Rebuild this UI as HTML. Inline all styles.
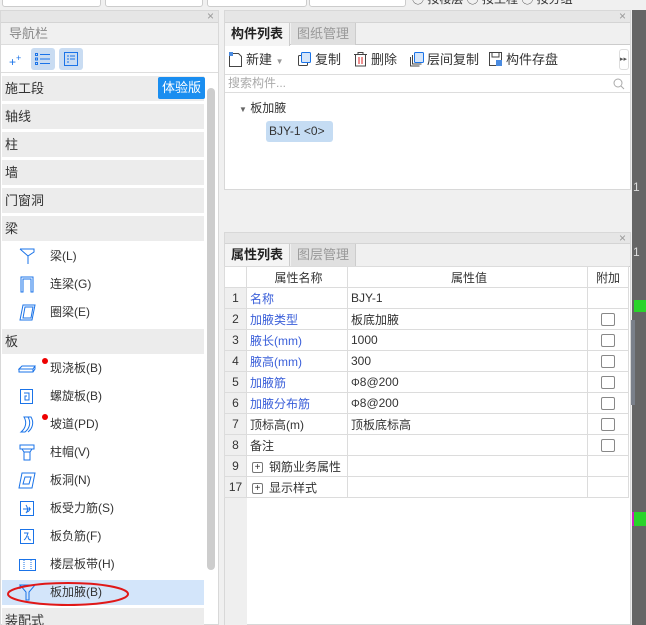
<!DOCTYPE html><html><head><meta charset="utf-8"><style>
*{box-sizing:border-box;margin:0;padding:0}
html,body{width:646px;height:625px;overflow:hidden}
body{background:#f0f0f0;font-family:"Liberation Sans","Noto Sans CJK SC",sans-serif;font-size:12px;color:#333;position:relative}
.a{position:absolute}
.ph{background:#e6e6e6;border-bottom:1px solid #d4d4d4}
.x{position:absolute;right:4px;top:-2px;color:#999;font-size:12px}
.row{position:absolute;left:2px;width:202px;height:25px;background:#ececec;line-height:25px;padding-left:3px;font-size:13px;color:#333}
.it{position:absolute;left:2px;width:202px;height:25px;line-height:25px;padding-left:48px;font-size:12px;color:#333}
.it svg{position:absolute;left:16px;top:4px}
.dot{position:absolute;left:40px;top:2px;width:6px;height:6px;border-radius:3px;background:#e00}
table{border-collapse:collapse;position:absolute;left:224px;top:266px;width:405px;font-size:12px}
td{border:1px solid #dcdcdc;height:21px;padding-left:3px;background:#fff}
td.n{background:#efefef;text-align:center;padding:0;width:22px;color:#333}
.b{color:#3a5fd9}
.cb{display:inline-block;width:14px;height:13px;border:1px solid #888;border-radius:2px;vertical-align:middle}
.pl{display:inline-block;width:11px;height:11px;border:1px solid #777;border-radius:2px;font-size:10px;line-height:9px;text-align:center;margin:0 6px 0 2px;vertical-align:middle}
.tb{position:absolute;top:0;height:28px;line-height:28px;font-size:13px;color:#333;white-space:nowrap}
.tb svg{vertical-align:-3px;margin-right:3px}
</style></head><body>
<div class="a" style="left:2px;top:-8px;width:99px;height:15px;background:#fff;border:1px solid #ccc;border-radius:3px"></div>
<div class="a" style="left:105px;top:-8px;width:98px;height:15px;background:#fff;border:1px solid #ccc;border-radius:3px"></div>
<div class="a" style="left:207px;top:-8px;width:100px;height:15px;background:#fff;border:1px solid #ccc;border-radius:3px"></div>
<div class="a" style="left:309px;top:-8px;width:97px;height:15px;background:#fff;border:1px solid #ccc;border-radius:3px"></div>
<div class="a" style="left:412px;top:-8px;width:220px;height:15px;font-size:12px;line-height:15px;color:#333">◯ 按楼层 ◯ 按工程 ◯ 按分组</div>

<div class="a" style="left:0;top:10px;width:219px;height:615px;background:#fff;border:1px solid #d8d8d8">
 <div class="ph a" style="left:0;top:0;width:217px;height:12px"><span class="x">×</span></div>
 <div class="a" style="left:0;top:12px;width:217px;height:22px;background:#f0f0f0;border-bottom:1px solid #ddd;line-height:22px;padding-left:8px;font-size:13px;color:#888">导航栏</div>
 <div class="a" style="left:8px;top:42px;color:#1a73e8;font-size:12px">+<sup style="font-size:9px">+</sup></div>
 <div class="a" style="left:30px;top:37px;width:24px;height:22px;background:#c9dcf2;border-radius:3px"><svg width="24" height="22"><g stroke="#1a73e8" fill="none"><rect x="4.5" y="5.5" width="2" height="2"/><rect x="4.5" y="10" width="2" height="2"/><rect x="4.5" y="14.5" width="2" height="2"/><path d="M9 6.5h10M9 11h10M9 15.5h10"/></g></svg></div>
 <div class="a" style="left:58px;top:37px;width:24px;height:22px;background:#c9dcf2;border-radius:3px"><svg width="24" height="22"><g stroke="#1a73e8" fill="none"><rect x="5.5" y="4.5" width="13" height="13"/><path d="M8 8h2M11 8h5M8 11h2M11 11h5M8 14h2"/></g></svg></div>
 <div class="a" style="left:0;top:61px;width:217px;height:1px;background:#ddd"></div>
</div>
<div class="row" style="top:76px">施工段</div>
<div class="a" style="left:158px;top:77px;width:47px;height:22px;background:#1a8ef0;color:#fff;font-size:13px;line-height:22px;text-align:center;border-radius:2px">体验版</div>
<div class="row" style="top:104px">轴线</div>
<div class="row" style="top:132px">柱</div>
<div class="row" style="top:160px">墙</div>
<div class="row" style="top:188px">门窗洞</div>
<div class="row" style="top:216px">梁</div>
<div class="it" style="top:244px"><svg width="20" height="17"><path d="M2 1h14v3l-6 4v8M2 1l8 7" stroke="#1a73e8" fill="none"/></svg>梁(L)</div>
<div class="it" style="top:272px"><svg width="20" height="17"><path d="M3 16V1h12v15h-2V3H5v13z" stroke="#1a73e8" fill="none"/></svg>连梁(G)</div>
<div class="it" style="top:300px"><svg width="20" height="17"><path d="M5 1h12l-3 15H2zM7 3h8l-2 11H5z" stroke="#1a73e8" fill="none"/></svg>圈梁(E)</div>
<div class="row" style="top:329px">板</div>
<div class="it" style="top:356px"><svg width="20" height="17"><path d="M1 9h14l2-3H4zM1 9v3h14l2-3v-3M15 9v3" stroke="#1a73e8" fill="none"/></svg><span class="dot"></span>现浇板(B)</div>
<div class="it" style="top:384px"><svg width="20" height="17"><rect x="2.5" y="1.5" width="12" height="14" stroke="#1a73e8" fill="none"/><path d="M6 5h5v7H7V8h2" stroke="#1a73e8" fill="none"/></svg>螺旋板(B)</div>
<div class="it" style="top:412px"><svg width="20" height="17"><path d="M3 16c5-4 6-10 3-15h4c3 5 2 11-3 15zM10 1h3c3 5 2 11-3 15" stroke="#1a73e8" fill="none"/></svg><span class="dot"></span>坡道(PD)</div>
<div class="it" style="top:440px"><svg width="20" height="17"><path d="M2 1h14v4H2zM4 5l2 3h6l2-3M6 8v8h6V8" stroke="#1a73e8" fill="none"/></svg>柱帽(V)</div>
<div class="it" style="top:468px"><svg width="20" height="17"><path d="M4 1h13l-3 15H1zM7 5h6l-2 7H5z" stroke="#1a73e8" fill="none"/></svg>板洞(N)</div>
<div class="it" style="top:496px"><svg width="20" height="17"><rect x="2.5" y="1.5" width="13" height="14" stroke="#1a73e8" fill="none"/><path d="M5 9h8M8 5c2 3 2 6 0 8M11 7c1 2 1 4-2 5" stroke="#1a73e8" fill="none"/></svg>板受力筋(S)</div>
<div class="it" style="top:524px"><svg width="20" height="17"><rect x="2.5" y="1.5" width="13" height="14" stroke="#1a73e8" fill="none"/><path d="M6 5h4c-1 3-2 6-4 7M10 8c0 3 1 4 3 4" stroke="#1a73e8" fill="none"/></svg>板负筋(F)</div>
<div class="it" style="top:552px"><svg width="20" height="17"><rect x="1.5" y="3.5" width="16" height="11" stroke="#1a73e8" fill="none"/><path d="M6 4v10M13 4v10" stroke="#1a73e8" stroke-dasharray="1 1"/></svg>楼层板带(H)</div>
<div class="it" style="top:580px;background:#d3e5fa"><svg width="20" height="17"><path d="M2 1h15L11 8v8H8V8zM2 1v4" stroke="#1a73e8" fill="none"/></svg>板加腋(B)</div>
<svg class="a" style="left:6px;top:580px" width="124" height="28"><ellipse cx="62" cy="14" rx="60" ry="11" stroke="#e01818" stroke-width="2" fill="none"/></svg>
<div class="row" style="top:608px">装配式</div>
<div class="a" style="left:207px;top:88px;width:8px;height:482px;background:#cdcdcd;border-radius:4px"></div>

<div class="a" style="left:224px;top:10px;width:407px;height:180px;background:#fff;border:1px solid #d8d8d8">
 <div class="ph a" style="left:0;top:0;width:405px;height:12px"><span class="x">×</span></div>
 <div class="a" style="left:0;top:12px;width:405px;height:22px;background:#f0f0f0;border-bottom:1px solid #ccc"></div>
 <div class="a" style="left:0;top:12px;width:65px;height:23px;background:#f4f4f4;font-weight:bold;line-height:22px;text-align:center;font-size:13px;color:#222;border-right:1px solid #ccc">构件列表</div>
 <div class="a" style="left:66px;top:12px;width:65px;height:22px;background:#e0e0e0;line-height:22px;text-align:center;font-size:13px;color:#999;border-right:1px solid #ccc">图纸管理</div>
 <div class="a" style="left:0;top:35px;width:405px;height:28px;background:#fff">
  <span class="tb" style="left:3px"><svg width="15" height="16"><path d="M1.5 2.5h9l3 3v10h-12z" stroke="#444" fill="none"/><rect x="1" y="1" width="4" height="4" fill="#4a8be0"/></svg>新建 <span style="color:#999;font-size:8px">▼</span></span>
  <span class="tb" style="left:72px"><svg width="15" height="16"><rect x="1.5" y="4.5" width="9" height="10" rx="1" stroke="#444" fill="none"/><rect x="4.5" y="1.5" width="9" height="10" rx="1" stroke="#1a73e8" fill="#d6e6fa"/></svg>复制</span>
  <span class="tb" style="left:128px"><svg width="15" height="16"><path d="M1 3.5h13M5 3V1.5h5V3M2.5 4v11h10V4M6 6v7M9 6v7" stroke="#444" fill="none"/><path d="M6 6v7M9 6v7" stroke="#d22"/></svg>删除</span>
  <span class="tb" style="left:184px"><svg width="15" height="16"><path d="M1.5 6v9h9M3.5 4v9h9" stroke="#444" fill="none"/><rect x="5.5" y="1.5" width="9" height="10" rx="1" stroke="#1a73e8" fill="#d6e6fa"/></svg>层间复制</span>
  <span class="tb" style="left:263px"><svg width="15" height="16"><rect x="1.5" y="1.5" width="12" height="13" stroke="#444" fill="none"/><path d="M4 2v4h7V2" stroke="#444" fill="none"/><rect x="8" y="9" width="6" height="6" fill="#4a8be0"/></svg>构件存盘</span>
 </div>
 <div class="a" style="left:394px;top:38px;width:10px;height:21px;border:1px solid #ddd;border-radius:3px;font-size:7px;line-height:19px;color:#555">▸▸</div>
 <div class="a" style="left:0;top:63px;width:405px;height:19px;border-top:1px solid #ddd;border-bottom:1px solid #ddd;color:#aaa;font-size:12px;line-height:17px;padding-left:3px">搜索构件...<svg style="position:absolute;right:5px;top:3px" width="12" height="12"><circle cx="5" cy="5" r="4" stroke="#aaa" fill="none"/><path d="M8 8l3 3" stroke="#aaa"/></svg></div>
 <div class="a" style="left:14px;top:88px;font-size:12px;color:#333"><span style="font-size:8px;color:#666">▼</span> 板加腋</div>
 <div class="a" style="left:41px;top:110px;width:67px;height:21px;background:#c5dcf3;border-radius:3px;line-height:21px;padding-left:3px;font-size:12px">BJY-1 &lt;0&gt;</div>
</div>

<div class="a" style="left:224px;top:232px;width:407px;height:393px;background:#fff;border:1px solid #d8d8d8">
 <div class="ph a" style="left:0;top:0;width:405px;height:11px"><span class="x">×</span></div>
 <div class="a" style="left:0;top:11px;width:405px;height:23px;background:#f0f0f0;border-bottom:1px solid #ccc"></div>
 <div class="a" style="left:0;top:11px;width:65px;height:23px;background:#f4f4f4;font-weight:bold;line-height:22px;text-align:center;font-size:13px;color:#222;border-right:1px solid #ccc">属性列表</div>
 <div class="a" style="left:66px;top:11px;width:65px;height:22px;background:#e0e0e0;line-height:22px;text-align:center;font-size:13px;color:#999;border-right:1px solid #ccc">图层管理</div>
 <div class="a" style="left:0;top:265px;width:22px;height:130px;background:#efefef"></div>
</div>
<table>
<tr><td class="n" style="background:#fff"></td><td style="width:101px;text-align:center">属性名称</td><td style="width:240px;text-align:center">属性值</td><td style="text-align:center;padding:0">附加</td></tr>
<tr><td class="n">1</td><td class="b">名称</td><td>BJY-1</td><td></td></tr>
<tr><td class="n">2</td><td class="b">加腋类型</td><td>板底加腋</td><td style="text-align:center;padding:0"><span class="cb"></span></td></tr>
<tr><td class="n">3</td><td class="b">腋长(mm)</td><td>1000</td><td style="text-align:center;padding:0"><span class="cb"></span></td></tr>
<tr><td class="n">4</td><td class="b">腋高(mm)</td><td>300</td><td style="text-align:center;padding:0"><span class="cb"></span></td></tr>
<tr><td class="n">5</td><td class="b">加腋筋</td><td><span style="font-size:11px">Φ</span>8@200</td><td style="text-align:center;padding:0"><span class="cb"></span></td></tr>
<tr><td class="n">6</td><td class="b">加腋分布筋</td><td><span style="font-size:11px">Φ</span>8@200</td><td style="text-align:center;padding:0"><span class="cb"></span></td></tr>
<tr><td class="n">7</td><td>顶标高(m)</td><td>顶板底标高</td><td style="text-align:center;padding:0"><span class="cb"></span></td></tr>
<tr><td class="n">8</td><td>备注</td><td></td><td style="text-align:center;padding:0"><span class="cb"></span></td></tr>
<tr><td class="n">9</td><td><span class="pl">+</span>钢筋业务属性</td><td></td><td></td></tr>
<tr><td class="n">17</td><td><span class="pl">+</span>显示样式</td><td></td><td></td></tr>
</table>

<div class="a" style="left:632px;top:10px;width:14px;height:615px;background:#666"></div>
<div class="a" style="left:631px;top:320px;width:4px;height:85px;background:#7a808a"></div>
<div class="a" style="left:634px;top:300px;width:12px;height:12px;background:#2ad42a"></div>
<div class="a" style="left:634px;top:512px;width:12px;height:14px;background:#2ad42a"></div>
<div class="a" style="left:632px;top:512px;width:2px;height:14px;background:#d020c0"></div>
<div class="a" style="left:633px;top:180px;color:#ddd;font-size:12px">1</div>
<div class="a" style="left:633px;top:245px;color:#ddd;font-size:12px">1</div>
</body></html>
